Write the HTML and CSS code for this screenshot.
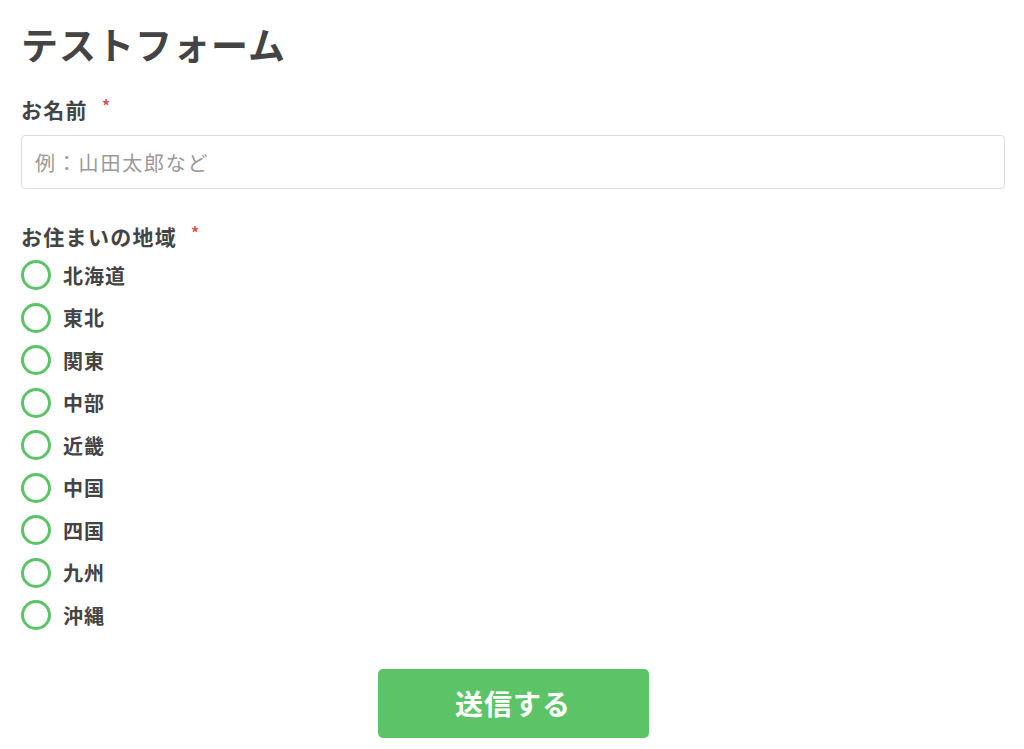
FILE: index.html
```html
<!DOCTYPE html>
<html lang="ja">
<head>
<meta charset="utf-8">
<title>テストフォーム</title>
<link rel="stylesheet" href="styles.css">
</head>
<body>
<form class="form">
  <h1 class="title">テストフォーム</h1>
  <div class="field">
    <label class="label" for="name">お名前<span class="req">*</span></label>
    <input class="input" id="name" type="text" placeholder="例：山田太郎など">
  </div>
  <div class="field field-radio">
    <div class="label">お住まいの地域<span class="req">*</span></div>
    <ul class="radios">
      <li class="radio"><span class="circle"></span>北海道</li>
      <li class="radio"><span class="circle"></span>東北</li>
      <li class="radio"><span class="circle"></span>関東</li>
      <li class="radio"><span class="circle"></span>中部</li>
      <li class="radio"><span class="circle"></span>近畿</li>
      <li class="radio"><span class="circle"></span>中国</li>
      <li class="radio"><span class="circle"></span>四国</li>
      <li class="radio"><span class="circle"></span>九州</li>
      <li class="radio"><span class="circle"></span>沖縄</li>
    </ul>
  </div>
  <div class="actions">
    <button class="submit" type="button">送信する</button>
  </div>
</form>
</body>
</html>
```
FILE: styles.css
```css
html, body {
  margin: 0;
  padding: 0;
  background: #fff;
}
body {
  font-family: "Noto Sans CJK JP", "Noto Sans", sans-serif;
  color: #444;
}
.form {
  padding: 18px 19px 0 21px;
}
.title {
  margin: 0;
  font-size: 37px;
  font-weight: 700;
  line-height: 52px;
  letter-spacing: 1px;
}
.field {
  margin-top: 23px;
}
.label {
  display: block;
  font-size: 21px;
  font-weight: 700;
  line-height: 24px;
  letter-spacing: 1.3px;
}
.req {
  color: #d9534f;
  font-size: 16px;
  margin-left: 14px;
  vertical-align: 6px;
}
.input {
  display: block;
  box-sizing: border-box;
  width: 100%;
  height: 54px;
  margin-top: 14px;
  padding: 0 13px;
  border: 1.5px solid #ddd;
  border-radius: 4px;
  font-family: inherit;
  font-size: 20px;
  letter-spacing: 1.8px;
  color: #444;
  outline: none;
}
.input::placeholder {
  color: #999;
}
.field-radio {
  margin-top: 31px;
}
.radios {
  list-style: none;
  margin: 6px 0 0;
  padding: 0;
}
.radio {
  display: flex;
  align-items: center;
  height: 42.5px;
  font-size: 20px;
  font-weight: 700;
  letter-spacing: 1px;
}
.circle {
  box-sizing: border-box;
  width: 30px;
  height: 30px;
  border: 3.5px solid #5cc466;
  border-radius: 50%;
  margin-right: 12px;
}
.actions {
  display: flex;
  justify-content: center;
  margin-top: 32px;
}
.submit {
  width: 271px;
  height: 69px;
  background: #5cc466;
  border: none;
  border-radius: 5px;
  color: #fff;
  font-family: inherit;
  font-size: 28px;
  font-weight: 700;
  letter-spacing: 1px;
}
```
